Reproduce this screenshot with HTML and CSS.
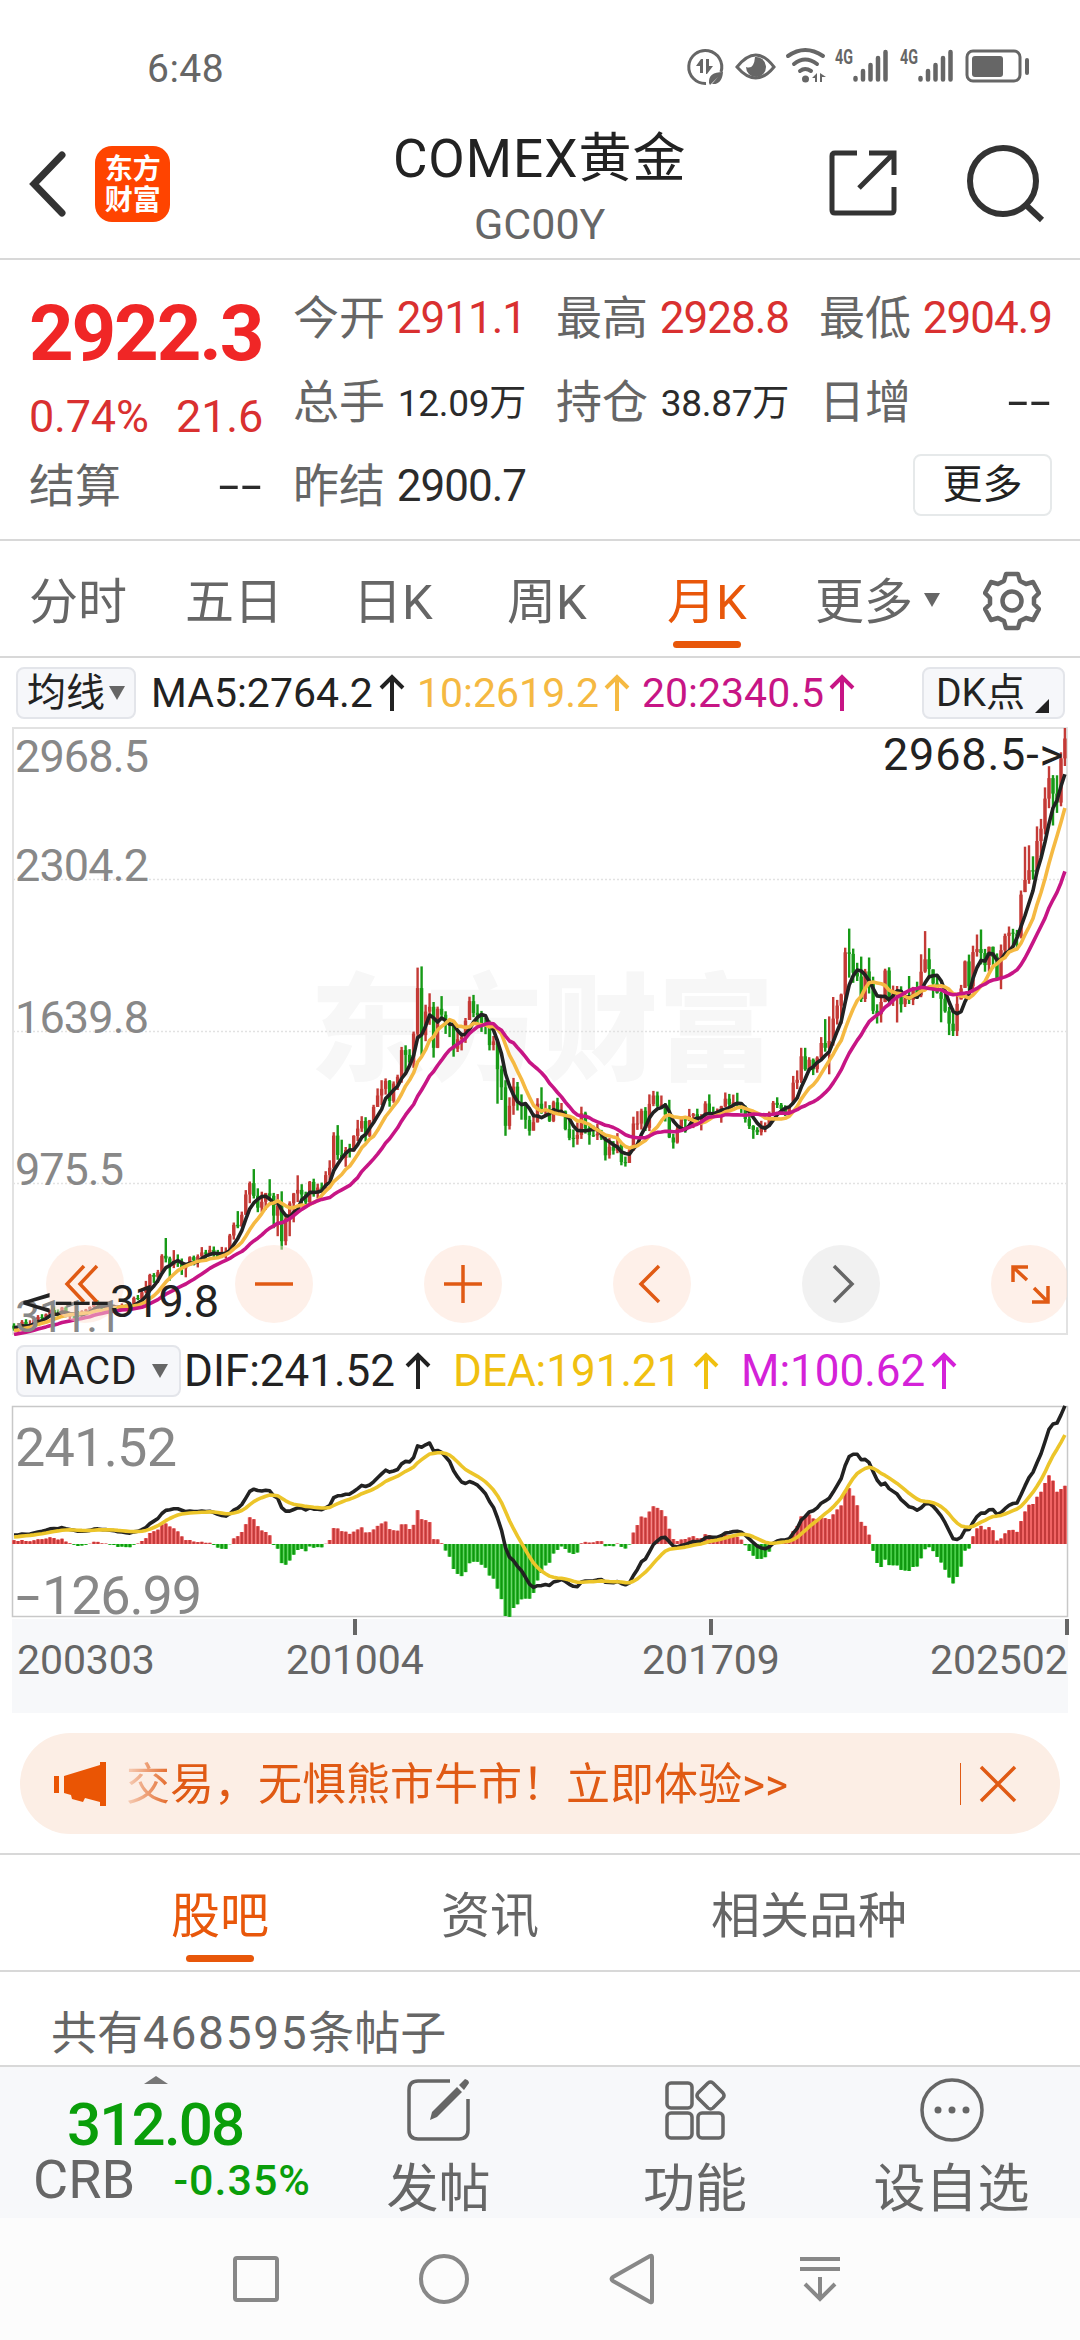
FILE: index.html
```html
<!DOCTYPE html>
<html lang="zh-CN">
<head>
    <meta charset="UTF-8">
    <meta name="viewport" content="width=device-width, initial-scale=1.0">
    <title>COMEX黄金</title>
    <link rel="stylesheet" href="styles.css">
</head>
<body>

    <div class="status">
        <span class="time">6:48</span>
        <svg class="status-icons" viewBox="0 0 380 60">
            <g fill="none" stroke="#666" stroke-width="3">
                <path d="M50 36 A16.5 16.5 0 1 0 35 47.5"/>
                <path d="M66 31 Q85 7 103 31 Q85 53 66 31z"/>
                <g stroke-width="4" stroke-linecap="round">
                    <path d="M117 20 Q134 8 152 20"/>
                    <path d="M123 28 Q134 19 146 28"/>
                    <path d="M129 35 Q134 31 140 35"/>
                </g>
                <rect x="296" y="15" width="53" height="30" rx="6"/>
            </g>
            <g fill="#666">
                <path d="M25 30 L30 23 H32 V37 H29 V30z M35 23 H38 V30 H42 L36 38 H35z"/>
                <path d="M38 47 Q37 36 52 36 Q51 49 41 48 L47 41 L39 49z"/>
                <path d="M84 21 A10 10 0 1 1 75 31 Q83 34 84 21z"/>
                <circle cx="134.500" cy="43" r="3.500"/>
                <path d="M141 42 L146 37 V46 H144 V42z M149 37 L155 41 H151 V46 H149z"/>
                <rect x="301" y="20" width="31" height="21" rx="3"/>
                <rect x="354" y="22" width="4" height="17" rx="2"/>
            </g>
            <g stroke="#666" stroke-width="4.500" stroke-linecap="round">
                <path d="M184.500 42V43.500 M192 35V43.500 M199.500 29V43.500 M207 22V43.500 M214.500 16V43.500"/>
                <path d="M249.500 42V43.500 M257 35V43.500 M264.500 29V43.500 M272 22V43.500 M279.500 16V43.500"/>
            </g>
            <g class="net">
                <text x="164" y="28" textLength="18" lengthAdjust="spacingAndGlyphs">4G</text>
                <text x="229" y="28" textLength="18" lengthAdjust="spacingAndGlyphs">4G</text>
            </g>
        </svg>
    </div>

    <div class="header">
        <svg class="back" width="40" height="68" viewBox="0 0 40 68"><path d="M35 5 L7 34 L35 63"/></svg>
        <div class="logo"><span>东方</span><span>财富</span></div>
        <div class="title">
            <h1>COMEX黄金</h1>
            <p>GC00Y</p>
        </div>
        <svg class="share" width="70" height="70" viewBox="0 0 70 70"><path d="M28 4 H6 Q3 4 3 7 V61 Q3 64 6 64 H62 Q65 64 65 61 V38 M40 4 H65 V26 M64 5 L30 39"/></svg>
        <svg class="search" width="80" height="80" viewBox="0 0 80 80"><circle cx="37" cy="37" r="33"/><path d="M60 61 L76 76"/></svg>
    </div>

    <div class="quote">
        <div class="price">2922.3</div>
        <div class="item"><label>今开</label><b class="red">2911.1</b></div>
        <div class="item"><label>最高</label><b class="red">2928.8</b></div>
        <div class="item"><label>最低</label><b class="red">2904.9</b></div>
        <div class="item change red"><span>0.74%</span><span>21.6</span></div>
        <div class="item"><label>总手</label><b class="small">12.09万</b></div>
        <div class="item"><label>持仓</label><b class="small">38.87万</b></div>
        <div class="item"><label>日增</label><b class="none">--</b></div>
        <div class="item"><label>结算</label><b class="none">--</b></div>
        <div class="item"><label>昨结</label><b>2900.7</b></div>
        <div></div>
        <div class="more">更多</div>
    </div>

    <div class="period">
        <span>分时</span>
        <span>五日</span>
        <span>日K</span>
        <span>周K</span>
        <span class="ativo">月K</span>
        <span class="drop">更多<i class="tri"></i></span>
        <svg width="58" height="60" viewBox="0 0 58 60">
            <path d="M23 3 H35 L37 10 L43 13 L50 11 L56 22 L51 27 V33 L56 38 L50 49 L43 47 L37 50 L35 57 H23 L21 50 L15 47 L8 49 L2 38 L7 33 V27 L2 22 L8 11 L15 13 L21 10z"/>
            <circle cx="29" cy="30" r="9.500"/>
        </svg>
    </div>

    <div class="legend ma">
        <div class="btn">均线<i class="tri"></i></div>
        <span class="ma5 c-dark">MA5:2764.2</span><svg class="up c-dark"><use href="#up"/></svg>
        <span class="ma10 c-gold">10:2619.2</span><svg class="up c-gold"><use href="#up"/></svg>
        <span class="ma20 c-pink">20:2340.5</span><svg class="up c-pink"><use href="#up"/></svg>
        <div class="btn dk">DK点<i class="corner"></i></div>
    </div>

    <div class="chart">
        <svg id="kline" width="1080" height="609" viewBox="0 0 1080 609">
            <text class="mark" x="310" y="344" textLength="464">东方财富</text>
            <g class="grid"><path d="M13 152.500H1067 M13 304.500H1067 M13 456.500H1067"/></g>
            <rect class="frame" x="13" y="1" width="1054" height="606"/>
            <g id="candles"></g>
            <g id="lines"></g>
        </svg>
        <div class="tools">
            <svg viewBox="0 0 78 78"><path d="M38 21 L21 39 L38 57 M51 21 L34 39 L51 57"/></svg>
            <svg viewBox="0 0 78 78"><path d="M20 39 H58"/></svg>
            <svg viewBox="0 0 78 78"><path d="M20 39 H58 M39 20 V58"/></svg>
            <svg viewBox="0 0 78 78"><path d="M46 21 L28 39 L46 57"/></svg>
            <svg class="off" viewBox="0 0 78 78"><path d="M32 21 L50 39 L32 57"/></svg>
            <svg viewBox="0 0 78 78"><path d="M37 22 H22 V37 M22 22 L36 35 M41 57 H57 V41 M57 57 L43 43"/></svg>
        </div>
        <svg class="peak" width="1080" height="609" viewBox="0 0 1080 609">
            <g class="axis">
                <text x="15" y="45" textLength="134">2968.5</text>
                <text x="15" y="154" textLength="134">2304.2</text>
                <text x="15" y="306" textLength="134">1639.8</text>
                <text x="15" y="458" textLength="109">975.5</text>
                <text x="15" y="605" textLength="107">311.1</text>
            </g>
            <text x="883" y="43" textLength="180">2968.5-&gt;</text>
            <text y="590"><tspan x="21" textLength="88" lengthAdjust="spacingAndGlyphs">&lt;---</tspan><tspan x="110" textLength="109">319.8</tspan></text>
        </svg>
    </div>

    <div class="legend macd">
        <div class="btn wide">MACD<i class="tri"></i></div>
        <span class="dif c-dark">DIF:241.52</span><svg class="up c-dark"><use href="#up"/></svg>
        <span class="dea c-yellow">DEA:191.21</span><svg class="up c-yellow"><use href="#up"/></svg>
        <span class="m c-purple">M:100.62</span><svg class="up c-purple"><use href="#up"/></svg>
    </div>
    <svg id="macd" width="1080" height="213" viewBox="0 0 1080 213">
        <rect class="frame dark" x="12.500" y="1.500" width="1055" height="210"/>
        <g id="bars"></g>
        <g id="dif"></g>
        <g class="axis big">
            <text x="15" y="61" textLength="162">241.52</text>
            <text y="209"><tspan x="16" textLength="24" lengthAdjust="spacingAndGlyphs">-</tspan><tspan x="42" textLength="160">126.99</tspan></text>
        </g>
    </svg>
    <div class="dates">
        <span>200303</span>
        <span class="tick">201004</span>
        <span class="tick">201709</span>
        <span class="tick last">202502</span>
    </div>

    <div class="banner">
        <svg width="54" height="46" viewBox="0 0 54 46"><path d="M0 15H5V32H0z M10 15 L46 4 V1 H52 V45 H46 V41 L31 37 L29 41 L18 38 L17 34 L10 32z"/></svg>
        <span class="ad">交易，无惧熊市牛市！立即体验&gt;&gt;</span>
        <i></i>
        <svg class="close" width="38" height="38" viewBox="0 0 38 38"><path d="M2 2 L36 36 M36 2 L2 36"/></svg>
    </div>

    <div class="tabs">
        <span class="ativo">股吧</span>
        <span>资讯</span>
        <span>相关品种</span>
    </div>
    <div class="posts">共有<em>468595</em>条帖子</div>

    <div class="bottom">
        <div class="index">
            <i></i>
            <strong>312.08</strong>
            <p>CRB <em>-0.35%</em></p>
        </div>
        <div class="action">
            <svg width="66" height="66" viewBox="0 0 66 66">
                <path d="M44 4 H12 Q3 4 3 13 V53 Q3 62 12 62 H53 Q62 62 62 53 V22"/>
                <path class="fill" d="M24 43 L26 35 L51 10 L56 15 L31 40z M53 8 L59 2 Q63 3 63 6 L58 13z"/>
            </svg>
            发帖
        </div>
        <div class="action">
            <svg width="66" height="66" viewBox="0 0 66 66">
                <rect x="5" y="6" width="25" height="25" rx="4"/>
                <rect x="5" y="36" width="25" height="25" rx="4"/>
                <rect x="36" y="36" width="25" height="25" rx="4"/>
                <path d="M46 6 Q48.500 4 51 6 L61 16 Q63 18.500 61 21 L51 31 Q48.500 33 46 31 L36 21 Q34 18.500 36 16z"/>
            </svg>
            功能
        </div>
        <div class="action">
            <svg width="66" height="66" viewBox="0 0 66 66">
                <circle cx="33" cy="33" r="30"/>
                <g class="fill"><circle cx="19" cy="33" r="3.500"/><circle cx="33" cy="33" r="3.500"/><circle cx="47" cy="33" r="3.500"/></g>
            </svg>
            设自选
        </div>
    </div>

    <div class="nav">
        <svg viewBox="0 0 56 56"><rect x="7" y="7" width="42" height="42" rx="2"/></svg>
        <svg viewBox="0 0 56 56"><circle cx="28" cy="28" r="23"/></svg>
        <svg viewBox="0 0 56 56"><path d="M48 6 V50 Q48 52 46 51 L9 30 Q6 28 9 26 L46 5 Q48 4 48 6z"/></svg>
        <svg viewBox="0 0 56 56"><path d="M8 8 H48 M8 18 H48 M28 26 V47 M13 33 L28 48 L43 33"/></svg>
    </div>

    <svg class="defs">
        <symbol id="up" viewBox="0 0 26 38"><path d="M13 37 V3 M2 14 L13 3 L24 14"/></symbol>
    </svg>

    <script src="chart.js"></script>
</body>
</html>
```
FILE: styles.css
```css
* {
    margin: 0;
    padding: 0;
    box-sizing: border-box;
}
body {
    width: 1080px;
    background: #fff;
    color: #666;
    font-family: Roboto, "Noto Sans CJK SC", sans-serif;
    overflow-x: hidden;
}
svg {
    display: block;
    flex: none;
}
i, em {
    font-style: normal;
}
.defs {
    display: none;
}

/* status bar */
.status {
    height: 120px;
    padding: 36px 29px 0 147px;
    display: flex;
    justify-content: space-between;
}
.time {
    font-size: 39px;
    line-height: 66px;
    letter-spacing: 0.5px;
}
.status-icons {
    width: 380px;
    height: 60px;
}
.net {
    fill: #666;
    font-size: 21px;
    font-weight: bold;
}

/* header */
.header {
    height: 140px;
    border-bottom: 2px solid #d8d8d8;
    padding: 0 34px 0 27px;
    display: flex;
    align-items: center;
}
.header svg {
    fill: none;
    stroke: #333;
    stroke-width: 6;
    margin-top: -11px;
}
.header .back {
    stroke-width: 7;
    stroke-linecap: round;
}
.logo {
    width: 76px;
    height: 76px;
    margin: -10px 0 0 28px;
    padding-top: 8px;
    border-radius: 17px;
    background: #ff4400;
    color: #fff;
    font-size: 28px;
    font-weight: bold;
    line-height: 31px;
    text-align: center;
}
.logo span {
    display: block;
}
.title {
    width: 400px;
    margin: 0 91px 0 171px;
    text-align: center;
}
.title h1 {
    font-size: 53px;
    font-weight: normal;
    line-height: 70px;
    color: #222;
    letter-spacing: 1px;
    white-space: nowrap;
}
.title p {
    font-size: 43px;
    line-height: 60px;
}
.header .share {
    stroke-width: 5;
    margin-right: 67px;
}

/* quote */
.quote {
    height: 281px;
    padding: 16px 27px 0 29px;
    border-bottom: 2px solid #d8d8d8;
    display: grid;
    grid-template-columns: 234px 233px 233px 233px;
    grid-template-rows: 84px 84px 84px;
    column-gap: 30px;
    align-items: center;
}
.price {
    color: #f02626;
    font-size: 78px;
    font-weight: bold;
    letter-spacing: -2.2px;
    padding-top: 30px;
}
.item {
    display: flex;
    justify-content: space-between;
    align-items: center;
    white-space: nowrap;
}
.item label {
    font-size: 46px;
    line-height: 84px;
}
.item b {
    font-size: 44px;
    font-weight: normal;
    color: #2b2b2b;
    letter-spacing: -1px;
}
.item .small {
    font-size: 37px;
    letter-spacing: -0.3px;
    margin-top: -4px;
}
.item .none {
    transform: scaleX(1.7);
    transform-origin: right;
    letter-spacing: 1px;
}
.item.red, .item .red {
    color: #d93030;
}
.change {
    font-size: 45px;
    padding-top: 28px;
    letter-spacing: -0.2px;
}
.more {
    justify-self: end;
    width: 139px;
    height: 62px;
    margin-top: -3px;
    border: 2px solid #e6e9ea;
    border-radius: 8px;
    color: #222;
    font-size: 40px;
    line-height: 58px;
    text-align: center;
}

/* period tabs */
.period {
    height: 117px;
    padding-left: 29px;
    border-bottom: 2px solid #d8d8d8;
    display: grid;
    grid-template-columns: 156px 168px 154px 160px 148px 168px 60px;
    align-items: center;
    font-size: 49px;
}
.period span {
    line-height: 124px;
    white-space: nowrap;
}
.period svg {
    margin-top: -4px;
    fill: none;
    stroke: #666;
    stroke-width: 4.5;
    stroke-linejoin: round;
}
.ativo {
    color: #e8570a;
    display: flex;
    flex-direction: column;
    justify-self: start;
    align-items: center;
}
.ativo:after {
    content: "";
    width: 68px;
    height: 7px;
    margin-top: -24px;
    margin-bottom: 17px;
    border-radius: 4px;
    background: #e8570a;
}
.tri {
    display: inline-block;
    border: 8px solid transparent;
    border-top: 14px solid #666;
    border-bottom: 0;
}
.drop .tri {
    margin-left: 11px;
    vertical-align: 12px;
}

/* indicator rows */
.legend {
    display: flex;
    align-items: center;
    padding-left: 16px;
}
.legend span {
    white-space: nowrap;
}
.ma {
    height: 69px;
    font-size: 41px;
}
.ma5 { width: 228px; }
.ma10, .ma20 { width: 187px; }
.macd {
    height: 69px;
    font-size: 44px;
}
.dif { width: 221px; }
.dea { width: 240px; }
.m { width: 190px; }
.btn {
    width: 120px;
    height: 52px;
    margin-right: 15px;
    display: flex;
    align-items: center;
    justify-content: center;
    border: 2px solid #e3e5ea;
    border-radius: 8px;
    background: #f6f7fa;
    color: #222;
    font-size: 39px;
    line-height: 48px;
    white-space: nowrap;
}
.btn .tri {
    margin-left: 4px;
}
.dk {
    width: 143px;
    margin: 0 0 0 55px;
    justify-content: flex-start;
    padding-left: 12px;
}
.corner {
    margin: 26px 0 0 10px;
    border-left: 14px solid transparent;
    border-bottom: 14px solid #222;
}
.wide {
    width: 165px;
    margin-right: 3px;
    padding-right: 5px;
    letter-spacing: 0.8px;
}
.wide .tri {
    margin-left: 15px;
}
.up {
    width: 26px;
    height: 38px;
    fill: none;
    stroke: currentColor;
    stroke-width: 4;
    margin-right: 12px;
}
.macd .up {
    height: 40px;
    margin-right: 22px;
}
.c-dark { color: #222; }
.c-gold { color: #f5b942; }
.c-pink { color: #c71585; }
.c-yellow { color: #f0c010; }
.c-purple { color: #d422d8; }

/* charts */
.chart {
    height: 609px;
    position: relative;
}
.frame {
    fill: none;
    stroke: #e2e2e2;
    stroke-width: 2;
}
.frame.dark {
    stroke: #c8c8c8;
    stroke-width: 1.5;
}
.grid {
    stroke: #e2e2e2;
    stroke-width: 1.5;
    stroke-dasharray: 2 2;
}
.mark {
    font-size: 116px;
    font-weight: 900;
    fill: #f7f7f7;
}
.axis {
    font-size: 45px;
    fill: #888;
}
.big {
    font-size: 54px;
}
.peak {
    position: absolute;
    top: 0;
    left: 0;
    font-size: 45px;
    fill: #222;
}
#lines polyline, #dif polyline {
    fill: none;
    stroke-width: 3.6;
    stroke-linejoin: round;
}
.tools {
    position: absolute;
    top: 518px;
    left: 46px;
    width: 1021px;
    display: flex;
    gap: 111px;
    overflow: hidden;
}
.tools svg {
    width: 78px;
    height: 78px;
    border-radius: 50%;
    background: rgba(253, 226, 212, 0.5);
    fill: none;
    stroke: #e05a14;
    stroke-width: 3.5;
}
.tools .off {
    background: rgba(230, 230, 230, 0.55);
    stroke: #666;
}
.dates {
    width: 1056px;
    height: 94px;
    margin: 1px 0 0 12px;
    padding: 0 0 0 5px;
    background: #f7f8fa;
    display: grid;
    grid-template-columns: 269px 356px 288px 140px;
    font-size: 41px;
    line-height: 82px;
    letter-spacing: -0.1px;
}
.tick:before {
    content: "";
    display: block;
    width: 4px;
    height: 16px;
    margin: 0 0 -16px 67px;
    background: #666;
}
.last:before {
    margin-left: 135px;
}

/* banner */
.banner {
    width: 1040px;
    height: 101px;
    margin: 20px 0 19px 20px;
    padding-left: 34px;
    border-radius: 51px;
    background: #fceee5;
    display: flex;
    align-items: center;
    color: #e05a14;
}
.banner svg {
    fill: #ea5504;
}
.ad {
    width: 834px;
    margin: -5px 0 0 18px;
    font-size: 44px;
    white-space: nowrap;
    -webkit-mask-image: linear-gradient(to right, rgba(0,0,0,0.2), #000 50px);
    mask-image: linear-gradient(to right, rgba(0,0,0,0.2), #000 50px);
}
.banner i {
    width: 1px;
    height: 42px;
    background: #e05a14;
}
.banner .close {
    margin-left: 18px;
    stroke: #e05a14;
    stroke-width: 3.5;
}

/* bottom part */
.tabs {
    height: 119px;
    padding-left: 171px;
    border-top: 2px solid #d8d8d8;
    border-bottom: 2px solid #d8d8d8;
    display: grid;
    grid-template-columns: 270px 270px 300px;
    font-size: 49px;
    line-height: 124px;
}
.posts {
    height: 93px;
    padding-left: 51px;
    font-size: 46px;
    line-height: 122px;
    overflow: hidden;
}
.posts em {
    letter-spacing: 1.7px;
}
.bottom {
    height: 153px;
    border-top: 2px solid #d8d8d8;
    background: #f7f8fa;
    display: grid;
    grid-template-columns: 310px 257px 256px 257px;
}
.index i {
    display: block;
    width: 0;
    margin: 9px 0 0 144px;
    border: 12px solid transparent;
    border-top: 0;
    border-bottom: 8px solid #777;
}
.index strong {
    display: block;
    padding-left: 67px;
    color: #0a9e0a;
    font-size: 60px;
    font-weight: 500;
    line-height: 82px;
    letter-spacing: -1.8px;
}
.index p {
    padding-left: 33px;
    font-size: 54px;
    line-height: 28px;
    white-space: nowrap;
}
.index em {
    margin-left: 25px;
    font-size: 43px;
    font-weight: 500;
    letter-spacing: 1px;
    color: #0a9e0a;
    vertical-align: 3px;
}
.action {
    font-size: 52px;
    line-height: 84px;
    text-align: center;
}
.action svg {
    margin: 10px auto 5px;
    fill: none;
    stroke: #666;
    stroke-width: 3.5;
}
.action .fill {
    fill: #666;
    stroke: none;
}
.nav {
    height: 122px;
    background: #fcfcfc;
    padding: 33px 0 0 228px;
    display: flex;
    gap: 132px;
}
.nav svg {
    width: 56px;
    height: 56px;
    fill: none;
    stroke: #888;
    stroke-width: 4;
}
```
FILE: chart.js
```js
// closes before the first visible month, used to warm up the averages
var before = [276,293,280,275,279,282,297,303,309,327,314,304,313,324,318,319,335,350,348];

// monthly close / high / low since 2003-03
var closes = [
    335,339,364,346,355,375,385,384,397,416,
    402,396,427,387,394,393,391,410,418,429,451,438,
    422,437,428,435,416,437,429,433,469,465,494,517,
    570,562,582,654,642,613,632,626,599,604,648,635,
    652,669,663,680,661,648,663,673,743,790,783,834,
    923,973,917,865,891,928,917,830,875,718,817,884,
    927,943,923,889,978,927,953,951,1008,1040,1181,1096,
    1083,1118,1113,1180,1212,1245,1181,1248,1307,1357,1386,1421,
    1333,1409,1439,1556,1535,1502,1628,1828,1622,1725,1746,1566,
    1737,1711,1669,1664,1562,1604,1614,1685,1771,1719,1710,1675,
    1660,1578,1594,1472,1393,1224,1312,1396,1327,1323,1250,1202,
    1240,1321,1284,1296,1246,1327,1281,1287,1210,1171,1167,1184,
    1279,1213,1183,1182,1189,1172,1095,1132,1115,1141,1065,1060,
    1116,1234,1234,1290,1215,1320,1357,1311,1317,1273,1173,1151,
    1211,1253,1247,1268,1275,1242,1266,1322,1284,1270,1276,1309,
    1343,1318,1327,1319,1300,1254,1223,1206,1196,1215,1226,1281,
    1325,1316,1298,1285,1311,1413,1426,1529,1472,1514,1472,1523,
    1587,1566,1596,1694,1751,1800,1985,1978,1895,1879,1780,1901,
    1847,1728,1713,1767,1905,1771,1817,1818,1757,1783,1776,1829,
    1796,1900,1954,1911,1848,1807,1781,1726,1672,1640,1759,1826,
    1945,1836,1986,1999,1982,1929,2009,1965,1866,1994,2057,2071,
    2067,2054,2238,2302,2345,2339,2473,2527,2659,2749,2681,2641,
    2835,2922.3
];
var highs = [
    358,341,372,376,371,380,394,398,401,418,
    432,419,430,432,400,405,412,415,421,432,458,459,
    432,438,447,439,431,445,440,450,475,482,502,544,
    575,578,592,661,732,650,679,660,642,612,652,655,
    660,692,680,698,695,680,693,691,750,800,850,848,
    942,980,1034,950,935,930,990,930,925,937,835,893,
    930,1007,968,935,982,992,970,975,1025,1073,1196,1227,
    1163,1131,1145,1183,1250,1266,1262,1250,1316,1388,1424,1432,
    1425,1419,1448,1570,1577,1560,1637,1918,1923,1755,1805,1767,
    1747,1793,1726,1684,1673,1643,1633,1697,1790,1798,1757,1728,
    1697,1686,1618,1605,1488,1424,1349,1434,1416,1362,1327,1268,
    1280,1345,1393,1331,1315,1334,1347,1324,1291,1256,1208,1239,
    1308,1286,1224,1225,1233,1206,1175,1170,1157,1192,1146,1089,
    1129,1264,1288,1299,1306,1362,1377,1374,1357,1324,1338,1189,
    1221,1265,1264,1298,1280,1299,1275,1332,1362,1308,1300,1312,
    1370,1364,1361,1369,1326,1313,1266,1227,1218,1246,1239,1287,
    1333,1349,1324,1314,1311,1443,1467,1566,1566,1525,1519,1529,
    1613,1692,1704,1789,1776,1804,2005,2089,2001,1939,1966,1912,
    1962,1878,1757,1800,1913,1919,1839,1837,1836,1815,1881,1833,
    1856,1976,2078,2003,1910,1882,1814,1824,1746,1738,1806,1842,
    1949,1975,2014,2063,2085,2000,2010,2010,1980,2019,2067,2098,
    2088,2083,2256,2448,2454,2406,2537,2570,2708,2801,2762,2761,
    2862,2968.5
];
var lows = [
    326,319.8,339,340,340,347,368,366,376,389,
    398,387,390,384,371,379,385,388,397,410,427,434,
    411,411,422,423,413,414,418,431,430,459,455,489,
    515,535,535,580,625,545,600,605,570,560,610,612,
    603,640,635,658,650,640,644,642,672,725,775,782,
    834,885,905,845,846,856,895,775,740,681,700,740,
    801,890,883,865,880,913,905,932,948,987,1026,1075,
    1074,1044,1085,1111,1157,1197,1155,1175,1238,1307,1315,1361,
    1308,1325,1381,1413,1462,1490,1478,1608,1535,1595,1667,1523,
    1565,1690,1627,1613,1527,1548,1555,1588,1688,1700,1672,1636,
    1626,1555,1555,1321,1337,1180,1208,1272,1291,1251,1211,1181,
    1203,1238,1277,1268,1241,1240,1281,1271,1204,1161,1130,1141,
    1167,1190,1141,1175,1162,1162,1072,1080,1098,1104,1051,1045,
    1061,1115,1206,1208,1201,1201,1310,1305,1305,1243,1170,1124,
    1146,1207,1194,1244,1214,1236,1204,1251,1278,1263,1265,1238,
    1305,1306,1306,1309,1281,1238,1210,1167,1184,1182,1196,1222,
    1278,1302,1281,1267,1267,1323,1385,1412,1465,1463,1446,1457,
    1520,1549,1450,1576,1668,1671,1766,1874,1851,1859,1767,1767,
    1804,1714,1673,1677,1766,1749,1750,1677,1721,1745,1758,1753,
    1780,1788,1895,1870,1785,1804,1678,1720,1622,1618,1618,1778,
    1829,1811,1810,1966,1932,1900,1900,1914,1862,1823,1955,1987,
    2004,1996,2046,2249,2285,2304,2327,2403,2502,2617,2541,2596,
    2625,2802
];

var all = before.concat(closes);
var n0 = before.length;

function x(i) { return 14 + i * 3.996; }
function y(p) { return 1 + (2968.5 - p) / 2657.4 * 606; }
function yM(v) { return 139 - v * 0.571; }

function add(id, html) {
    document.getElementById(id).innerHTML += html;
}
function line(points, color) {
    return '<polyline points="' + points.join(' ') + '" stroke="' + color + '"/>';
}
function rect(cx, y1, w, h, color) {
    return '<rect x="' + (cx - w / 2).toFixed(1) + '" y="' + y1.toFixed(1) + '" width="' + w + '" height="' + h.toFixed(1) + '" fill="' + color + '"/>';
}

// candles
function candles() {
    var html = '';
    for (var i = 0; i < closes.length; i++) {
        var open = all[n0 + i - 1];
        var color = closes[i] >= open ? '#c43a36' : '#179a17';
        var y1 = y(Math.min(Math.max(open, closes[i]), highs[i]));
        var y2 = y(Math.max(Math.min(open, closes[i]), lows[i]));
        html += rect(x(i), y(highs[i]), 2.4, y(lows[i]) - y(highs[i]), color);
        html += rect(x(i), y1, 3.4, Math.max(y2 - y1, 1), color);
    }
    add('candles', html);
}

// moving averages
function average(n) {
    var points = [];
    for (var i = 0; i < closes.length; i++) {
        var end = n0 + i + 1;
        var part = all.slice(Math.max(0, end - n), end);
        var sum = part.reduce(function (a, b) { return a + b; }, 0);
        points.push(x(i).toFixed(1) + ',' + y(sum / part.length).toFixed(1));
    }
    return points;
}

// macd 12 26 9
function macd() {
    var fast = all[0], slow = all[0], dea = 0;
    var difs = [], deas = [], bars = '', stripes = '';
    all.forEach(function (p, k) {
        fast += (p - fast) * 2 / 13;
        slow += (p - slow) * 2 / 27;
        var dif = fast - slow;
        dea += (dif - dea) * 2 / 10;
        var i = k - n0;
        if (i < 0) return;
        var m = 2 * (dif - dea);
        var y1 = Math.min(yM(0), yM(m));
        var h = Math.abs(yM(m) - yM(0));
        bars += rect(x(i), y1, 4, h, m > 0 ? '#f06464' : '#3cc83c');
        stripes += rect(x(i), y1, 2, h, m > 0 ? '#c23a3a' : '#0f960f');
        difs.push(x(i).toFixed(1) + ',' + yM(dif).toFixed(1));
        deas.push(x(i).toFixed(1) + ',' + yM(dea).toFixed(1));
    });
    add('bars', bars + stripes);
    add('dif', line(difs, '#222') + line(deas, '#ecc52a'));
}

candles();
add('lines', line(average(5), '#222') + line(average(10), '#f5b942') + line(average(20), '#c71585'));
macd();
```
